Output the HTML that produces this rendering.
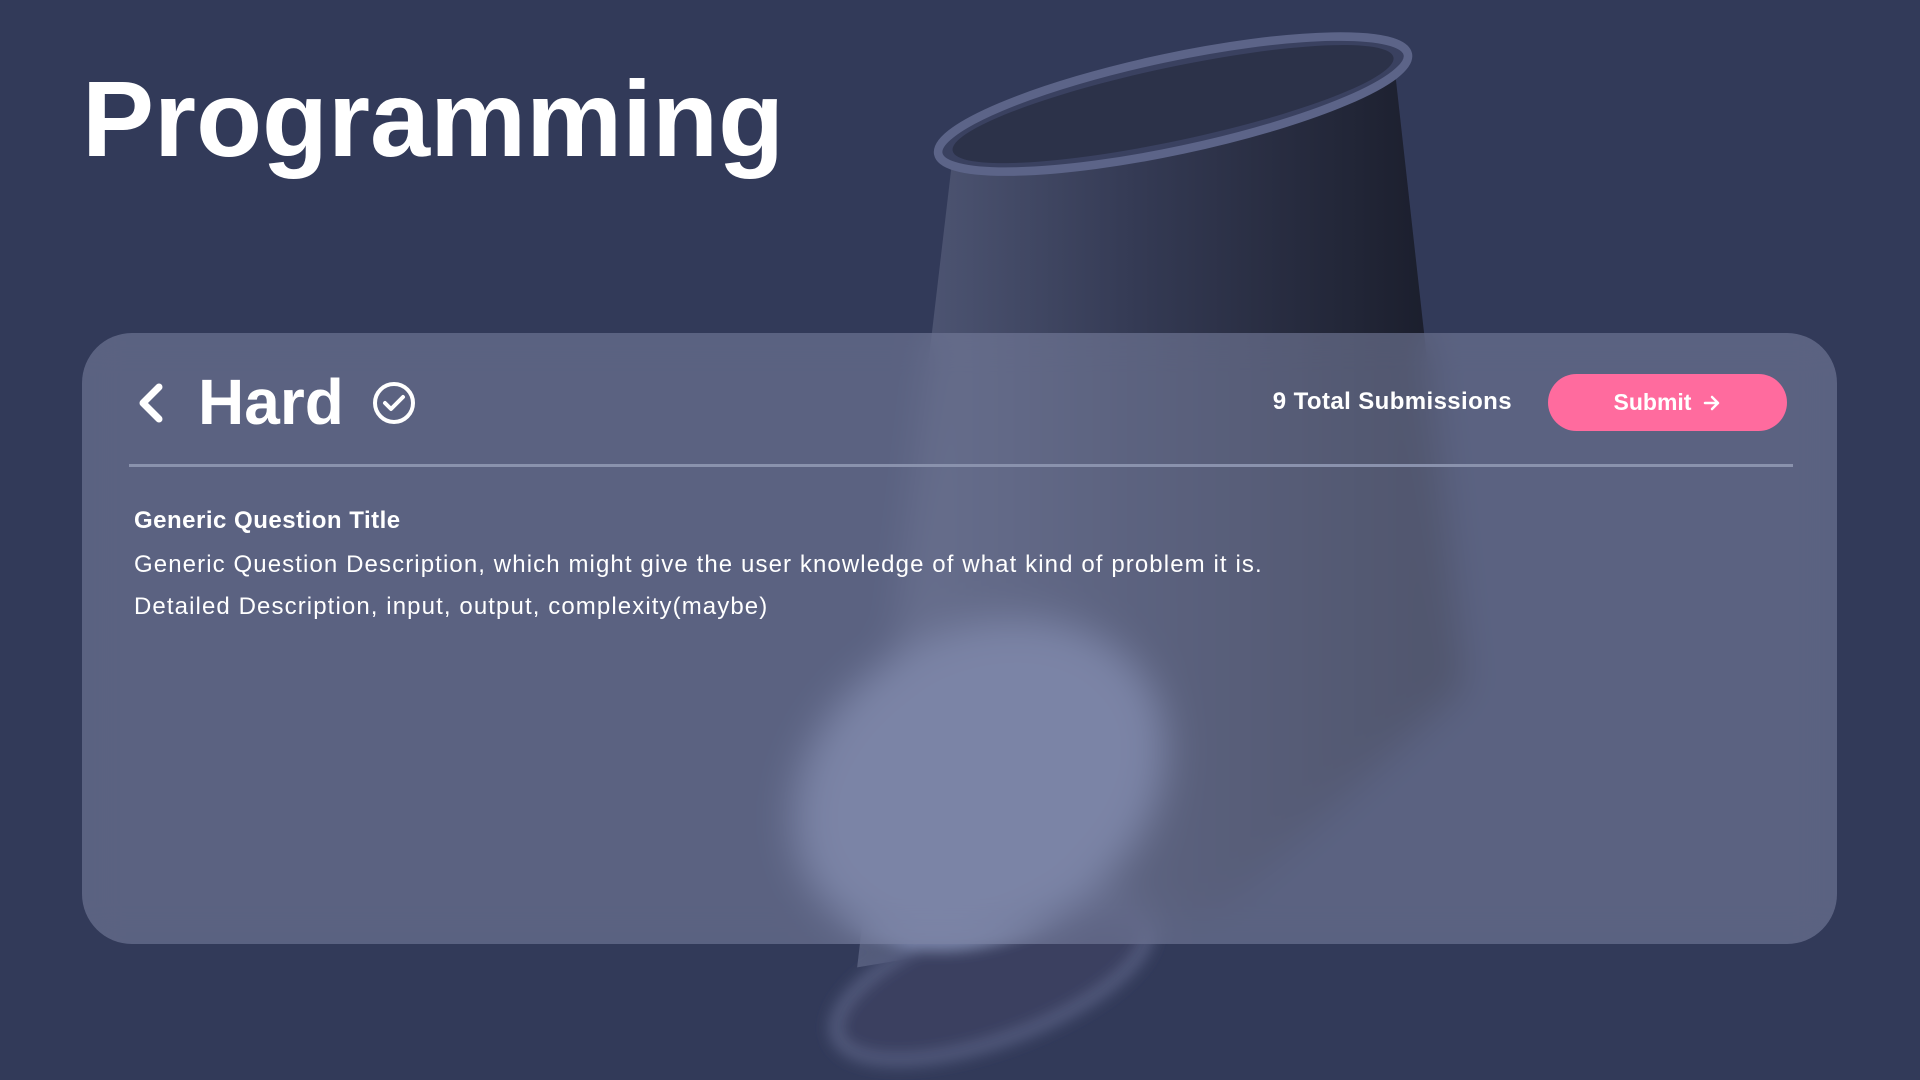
<!DOCTYPE html>
<html><head><meta charset="utf-8"><style>
html,body{margin:0;padding:0;width:1920px;height:1080px;overflow:hidden;background:#323a59;font-family:"Liberation Sans",sans-serif;}
#bg{position:absolute;left:0;top:0;width:1920px;height:1080px}
h1{position:absolute;left:82px;top:56px;margin:0;font-size:108px;font-weight:bold;color:#fff;letter-spacing:0}
.card{position:absolute;left:82px;top:333px;width:1755px;height:611px;border-radius:50px;background:rgba(120,128,158,0.58);backdrop-filter:blur(18px);-webkit-backdrop-filter:blur(18px);}
.line{position:absolute;left:47px;top:131px;width:1664px;height:3px;background:#8a92ad}
.hard{position:absolute;left:116px;top:32px;font-size:64px;font-weight:bold;color:#fff}
.subs{position:absolute;right:325px;top:55px;font-size:24px;font-weight:bold;color:#fff;letter-spacing:0.4px}
.btn{position:absolute;left:1466px;top:41px;width:239px;height:57px;border-radius:29px;background:#ff6b9e;color:#fff;font-size:23px;font-weight:bold;display:flex;align-items:center;justify-content:center;gap:12px}
.t{position:absolute;left:52px;color:#fff;font-size:24px;letter-spacing:1.1px}
</style></head><body>
<svg id="bg" viewBox="0 0 1568 882" preserveAspectRatio="none">
<defs>
<linearGradient id="bd" x1="0" y1="0" x2="1" y2="0">
<stop offset="0" stop-color="#555d7c"/><stop offset="0.45" stop-color="#353b55"/><stop offset="1" stop-color="#181b28"/></linearGradient>
<filter id="b1"><feGaussianBlur stdDeviation="6"/></filter>
</defs>
<path d="M778 128 L1140 65 L1195 560 L1000 740 L700 790 Z" fill="url(#bd)"/>
<ellipse cx="958" cy="85" rx="196" ry="38" transform="rotate(-12 958 85)" fill="#3a4160" stroke="#5c6488" stroke-width="7"/>
<ellipse cx="958" cy="85" rx="184" ry="30" transform="rotate(-12 958 85)" fill="#2c3249"/>
<g filter="url(#b1)">
<ellipse cx="810" cy="800" rx="135" ry="50" transform="rotate(-20 810 800)" fill="#3a4160" stroke="#5a6285" stroke-width="8"/>
<ellipse cx="800" cy="640" rx="160" ry="125" transform="rotate(-30 800 640)" fill="#7f8ab0"/>
</g>
</svg>
<h1>Programming</h1>
<div class="card">
<svg style="position:absolute;left:53px;top:50px" width="30" height="40" viewBox="0 0 30 40"><path d="M24 4 L8 20 L24 36" fill="none" stroke="#fff" stroke-width="7" stroke-linecap="round" stroke-linejoin="round"/></svg>
<div class="hard">Hard</div>
<svg style="position:absolute;left:290px;top:48px" width="44" height="44" viewBox="0 0 44 44"><circle cx="22" cy="22" r="19" fill="none" stroke="#fff" stroke-width="4"/><path d="M13 22 L19 28 L31 16" fill="none" stroke="#fff" stroke-width="4" stroke-linecap="round" stroke-linejoin="round"/></svg>
<div class="subs">9 Total Submissions</div>
<div class="btn">Submit <svg width="18" height="18" viewBox="0 0 18 18"><path d="M2 9 H15 M9 3 L15 9 L9 15" fill="none" stroke="#fff" stroke-width="2.5" stroke-linecap="round" stroke-linejoin="round"/></svg></div>
<div class="line"></div>
<div class="t" style="top:174px;font-weight:bold;letter-spacing:0.5px">Generic Question Title</div>
<div class="t" style="top:218px">Generic Question Description, which might give the user knowledge of what kind of problem it is.</div>
<div class="t" style="top:260px">Detailed Description, input, output, complexity(maybe)</div>
</div>
</body></html>
